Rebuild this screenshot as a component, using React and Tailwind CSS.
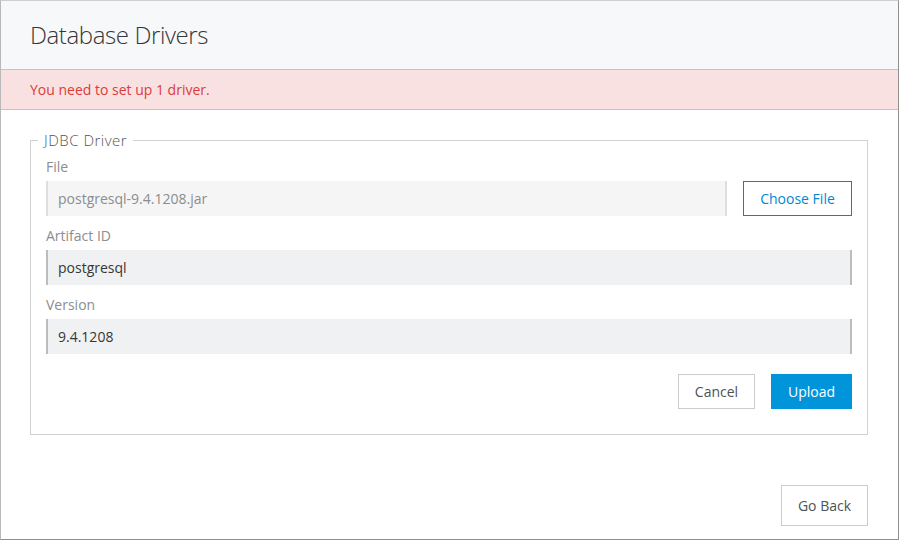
import React from "react";

export default function App() {
  const font = { fontFamily: '"Open Sans", "Noto Sans", sans-serif' };
  return (
    <div className="w-[899px] h-[540px] bg-white flex flex-col border-l border-t border-l-[#b9b9b9] border-t-[#cfcfcf] border-r border-b border-r-[#8f8f8f] border-b-[#8f8f8f] overflow-hidden" style={font}>
      <div className="h-[68px] bg-[#f7f8fa] flex items-center pl-[29px] shrink-0">
        <h1 className="text-[24px] font-light text-[#363636] tracking-[-0.4px]">Database Drivers</h1>
      </div>
      <div className="h-[41px] bg-[#fae1e1] border-y border-[#e9b4b4] flex items-center pl-[29px] shrink-0">
        <span className="text-[14px] text-[#dc3b3b]">You need to set up 1 driver.</span>
      </div>
      <div className="pt-[20px] pl-[29px] pr-[30px]">
        <fieldset className="border border-[#d1d1d1] px-[15px] pb-[25px]">
          <legend className="ml-[-8px] px-[6px] text-[15px] leading-[20px] text-[#555] font-light tracking-[0.5px]">JDBC Driver</legend>
          <div className="mt-[7px] text-[14px] leading-[20px] text-[#8b8d8f]">File</div>
          <div className="mt-[4px] flex gap-[16px]">
            <div className="flex-1 h-[35px] bg-[#f5f5f5] border-l-2 border-r-2 border-[#dedede] flex items-center pl-[10px] text-[14px] text-[#8b8d8f]">postgresql-9.4.1208.jar</div>
            <button className="w-[109px] h-[35px] border border-[#0088ce] text-[#0088ce] text-[14px] bg-white">Choose File</button>
          </div>
          <div className="mt-[10px] text-[14px] leading-[20px] text-[#8b8d8f]">Artifact ID</div>
          <div className="mt-[4px] h-[35px] bg-[#f0f1f3] border-l-2 border-r-2 border-[#bcbcbc] flex items-center pl-[10px] text-[14px] text-[#363636]">postgresql</div>
          <div className="mt-[10px] text-[14px] leading-[20px] text-[#8b8d8f]">Version</div>
          <div className="mt-[4px] h-[35px] bg-[#f0f1f3] border-l-2 border-r-2 border-[#bcbcbc] flex items-center pl-[10px] text-[14px] text-[#363636]">9.4.1208</div>
          <div className="mt-[20px] flex justify-end gap-[16px]">
            <button className="w-[77px] h-[35px] border border-[#cccccc] bg-white text-[14px] text-[#4d5258]">Cancel</button>
            <button className="w-[81px] h-[35px] bg-[#0095db] text-white text-[14px]">Upload</button>
          </div>
        </fieldset>
      </div>
      <div className="flex-1" />
      <div className="flex justify-end pr-[30px] pb-[13px]">
        <button className="w-[87px] h-[41px] border border-[#cccccc] bg-white text-[14px] text-[#4d5258]">Go Back</button>
      </div>
    </div>
  );
}
